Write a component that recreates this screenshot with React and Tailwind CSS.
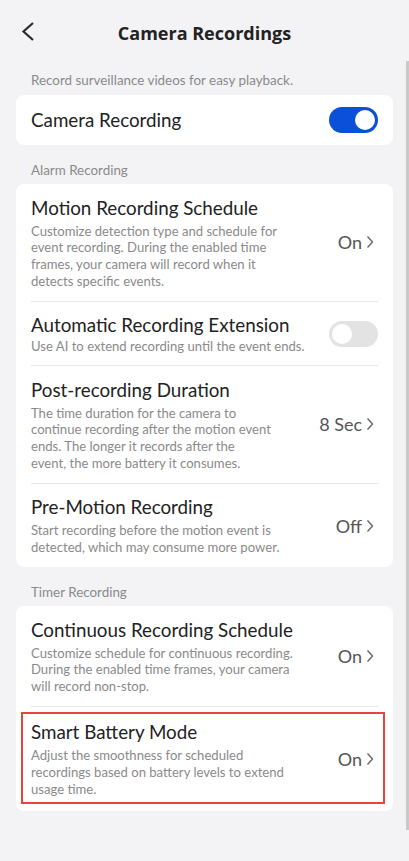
const Toggle = ({ on }) => (
  <div
    className={`w-[49px] h-[26px] rounded-full p-[3px] flex shrink-0 ${on ? 'bg-[#0a50d8] justify-end' : 'bg-[#e3e3e3] justify-start'}`}
  >
    <div className="w-[20px] h-[20px] rounded-full bg-white" />
  </div>
);

// small ">" used after values
const Arrow = () => (
  <svg width="8" height="14" viewBox="0 0 8 14" className="ml-[4px]">
    <polyline points="1.5,1.5 6.5,7 1.5,12.5" fill="none" stroke="#666" strokeWidth="1.4" />
  </svg>
);

const Value = ({ text }) => (
  <div className="flex items-center shrink-0 text-[#555] text-[18px] leading-none mr-[4px]">
    <span>{text}</span>
    <Arrow />
  </div>
);

// desc is given as lines so the wrapping matches the app
const Row = ({ title, desc, right, last, highlight, compact }) => (
  <div className={`relative ${last ? '' : 'border-b border-[#e6e6e6]'}`}>
    <div
      className={`flex items-center justify-between ${
        highlight ? 'pt-[13px] pb-[14px]' : compact ? 'pt-[11.5px] pb-[10px]' : 'py-[11.5px]'
      }`}
    >
      <div className="flex-1">
        <div className="text-[18.8px] leading-[24px] text-[#222] whitespace-nowrap">{title}</div>
        {desc && (
          <div
            className={`text-[13.1px] leading-[16.7px] text-[#8a8a8a] whitespace-nowrap ${compact ? 'mt-[1px]' : 'mt-[3px]'}`}
          >
            {desc.map((line) => (
              <div key={line}>{line}</div>
            ))}
          </div>
        )}
      </div>
      {right}
    </div>
    {highlight && (
      <div className="absolute top-[5px] bottom-[7px] left-[-10px] right-[-7px] border-2 border-[#e5453d]" />
    )}
  </div>
);

const SectionLabel = ({ children }) => (
  <div className="px-[31px] text-[13.4px] text-[#8a8a8a] leading-[16px] pt-[17px] pb-[6px]">{children}</div>
);

export default function App() {
  return (
    <div
      className="relative w-[409px] h-[861px] bg-[#f3f3f5] overflow-hidden"
      style={{ fontFamily: 'Lato, "Noto Sans", sans-serif' }}
    >
      {/* Header */}
      <div className="relative h-[66px] flex items-center justify-center">
        <svg width="14" height="21" viewBox="0 0 14 21" className="absolute left-[21px] top-[21px]">
          <polyline points="12,2 2.5,10.5 12,19" fill="none" stroke="#2a2a2a" strokeWidth="2.2" />
        </svg>
        <div
          className="text-[18px] font-bold text-[#222]"
          style={{ fontFamily: '"Open Sans", sans-serif' }}
        >
          Camera Recordings
        </div>
      </div>

      <div className="px-[31px] text-[13.4px] text-[#8a8a8a] leading-[16px] pt-[6px] pb-[7px]">
        Record surveillance videos for easy playback.
      </div>
      <div className="mx-[16px] bg-white rounded-[8px] h-[50px] px-[15px] flex items-center justify-between">
        <div className="text-[18.8px] text-[#222]">Camera Recording</div>
        <Toggle on />
      </div>

      <SectionLabel>Alarm Recording</SectionLabel>
      <div className="mx-[16px] bg-white rounded-[8px] px-[15px]">
        <Row
          title="Motion Recording Schedule"
          desc={[
            'Customize detection type and schedule for',
            'event recording. During the enabled time',
            'frames, your camera will record when it',
            'detects specific events.',
          ]}
          right={<Value text="On" />}
        />
        <Row
          title="Automatic Recording Extension"
          desc={['Use AI to extend recording until the event ends.']}
          right={<Toggle on={false} />}
          compact
        />
        <Row
          title="Post-recording Duration"
          desc={[
            'The time duration for the camera to',
            'continue recording after the motion event',
            'ends. The longer it records after the',
            'event, the more battery it consumes.',
          ]}
          right={<Value text="8 Sec" />}
        />
        <Row
          title="Pre-Motion Recording"
          desc={['Start recording before the motion event is', 'detected, which may consume more power.']}
          right={<Value text="Off" />}
          last
        />
      </div>

      <SectionLabel>Timer Recording</SectionLabel>
      <div className="mx-[16px] bg-white rounded-[8px] px-[15px]">
        <Row
          title="Continuous Recording Schedule"
          desc={[
            'Customize schedule for continuous recording.',
            'During the enabled time frames, your camera',
            'will record non-stop.',
          ]}
          right={<Value text="On" />}
        />
        <Row
          title="Smart Battery Mode"
          desc={[
            'Adjust the smoothness for scheduled',
            'recordings based on battery levels to extend',
            'usage time.',
          ]}
          right={<Value text="On" />}
          last
          highlight
        />
      </div>

      {/* scrollbar */}
      <div className="absolute right-0 top-[61px] w-[3px] h-[769px] bg-[#c9c9c9]" />
    </div>
  );
}
